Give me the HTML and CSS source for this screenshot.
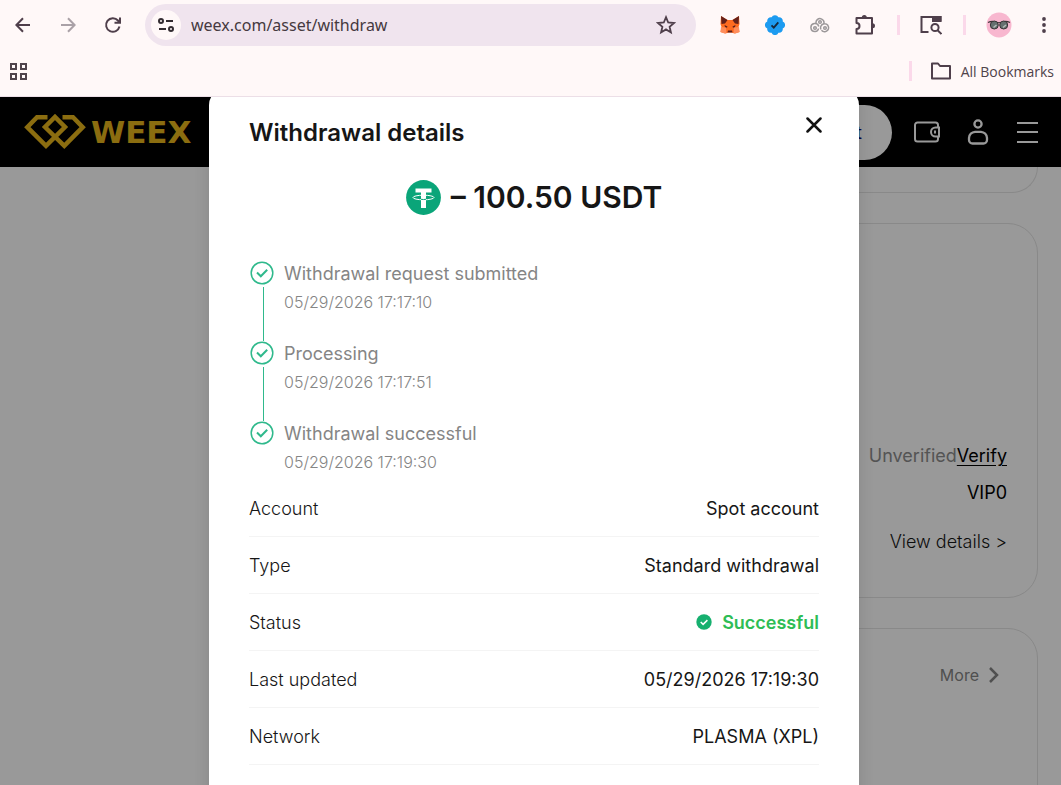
FILE: index.html
```html
<!DOCTYPE html>
<html lang="en">
<head>
<meta charset="utf-8">
<title>WEEX</title>
<link rel="stylesheet" href="styles.css">
</head>
<body>
<header class="browser">
  <div class="toolbar">
    <nav class="nav-buttons" aria-label="Navigation">
      <button class="icon-button" aria-label="Back"><svg width="16" height="16" viewBox="0 0 16 16" fill="none" stroke="#4f3f4b" stroke-width="2"><path d="M15 8H2M8 1.2 1.4 8 8 14.8"/></svg></button>
      <button class="icon-button" aria-label="Forward"><svg width="16" height="16" viewBox="0 0 16 16" fill="none" stroke="#aaa1a7" stroke-width="2"><path d="M1 8h13M8 1.2 14.6 8 8 14.8"/></svg></button>
      <button class="icon-button" aria-label="Reload"><svg width="18" height="18" viewBox="0 0 18 18" fill="none" stroke="#4f3f4b" stroke-width="2"><path d="M15.5 10.6A6.8 6.8 0 1 1 14 4.5L15.6 6.4M16 1.5v5.3h-5.5"/></svg></button>
    </nav>
    <div class="omnibox">
      <button class="site-info" aria-label="Site information"><svg width="16" height="14" viewBox="0 0 16 14" fill="none" stroke="#332c31" stroke-width="2"><circle cx="3" cy="3" r="2"/><path d="M8 3h7M1 11h7"/><circle cx="13" cy="11" r="2"/></svg></button>
      <input class="address" type="text" value="weex.com/asset/withdraw" aria-label="Address">
      <button class="icon-button" aria-label="Bookmark this page"><svg width="20" height="20" viewBox="0 0 20 20" fill="none" stroke="#4f3f4b" stroke-width="1.8"><path d="m10 2.2 2.2 5.3 5.8.5-4.4 3.8 1.3 5.6-4.9-3-4.9 3 1.3-5.6L2 8l5.8-.5z"/></svg></button>
    </div>
    <div class="extensions">
      <button class="icon-button" aria-label="Wallet extension"><svg width="20" height="20" viewBox="0 0 20 20"><path fill="#ff6b20" d="M1 1 7.5 5h5L19 1l.5 8-1 3 1 5-5 1.5-3-1h-3l-3 1L.5 17l1-5-1-3z"/><path fill="#64201a" d="M1 1l6.500 4L5 8.500 1.500 9zM19 1l-6.500 4L15 8.500l3.500.500z"/><path fill="#ff8d5c" d="M1 12l5 .5.5 5.500-2 .5L.5 17zM19 12l-5 .5-.5 5.500 2 .5 4-1.500z"/><path fill="#5e1f1a" d="m4.500 10 3 1.500-.5 1.200-2-.7zM15.500 10l-3 1.500.5 1.200 2-.7zM8 15.500h4l.5 2h-5z"/></svg></button>
      <button class="icon-button" aria-label="Verified badge extension"><svg width="20" height="20" viewBox="0 0 20 20"><path fill="#1d9bf0" d="M10 .3a3.600 3.600 0 0 1 3.400 2 3.600 3.600 0 0 1 4.300 4.300 3.600 3.600 0 0 1 0 6.800 3.600 3.600 0 0 1-4.300 4.300 3.600 3.600 0 0 1-6.800 0 3.600 3.600 0 0 1-4.300-4.300 3.600 3.600 0 0 1 0-6.800A3.600 3.600 0 0 1 6.600 2.300 3.600 3.600 0 0 1 10 .3z"/><path fill="none" stroke="#17283b" stroke-width="1.800" d="m6.500 10.300 2.300 2.400 4.500-5.400"/></svg></button>
      <button class="icon-button" aria-label="Coin extension"><svg width="20" height="16" viewBox="0 0 20 16" fill="none" stroke="#9b9799" stroke-width="1.500"><path d="M6 6a4 4 0 1 1 7.500 1.500M5 14.500a4 4 0 1 1 3.800-5M8.500 11.500a3.500 3.500 0 0 1-3.500 3M11 12.500a4 4 0 1 1 4 2.200 4 4 0 0 1-3.500-1.500"/><circle cx="10" cy="5" r="1.300"/><circle cx="5" cy="11" r="1.300"/><circle cx="15" cy="11" r="1.300"/></svg></button>
      <button class="icon-button" aria-label="Extensions"><svg width="22" height="22" viewBox="0 0 22 22" fill="none" stroke="#4f3f4b" stroke-width="2" stroke-linejoin="round"><path d="M2.500 4h15.500v15.500h-15.500v-4.500a3 3 0 0 0 0-6z"/><path fill="#4f3f4b" stroke="none" d="M7.800 3.500a2.500 2.500 0 0 1 5 0zM18.500 9.300a2.500 2.500 0 0 1 0 5z"/></svg></button>
      <span class="divider"></span>
      <button class="icon-button" aria-label="Search side panel"><svg width="22" height="20" viewBox="0 0 22 20" fill="none" stroke="#4f3f4b" stroke-width="2"><path d="M8.500 17H1.500V2h19v4.500"/><path fill="#4f3f4b" stroke="none" d="M12 1h9.500v6H12z"/><circle cx="15" cy="12.500" r="3.600"/><path d="m17.600 15.200 3.900 3.900"/></svg></button>
      <span class="divider"></span>
      <button class="icon-button profile" aria-label="Profile"><svg width="26" height="26" viewBox="0 0 26 26"><circle cx="13" cy="13" r="12.500" fill="#f8b7cf"/><path d="M2 10.500c3-1.500 6.500-1.500 9 .5q2-1 4 0c2.500-2 6-2 9-.5" fill="none" stroke="#3c3437" stroke-width="1.200"/><circle cx="8.300" cy="13" r="4" fill="#66706f" stroke="#393536"/><circle cx="17.700" cy="13" r="4" fill="#66706f" stroke="#393536"/><path d="M7.500 15.500l3-2.500M17 15.500l3-2.500" stroke="#b4bcb9" stroke-width="1.500"/></svg></button>
      <button class="icon-button more-menu" aria-label="Menu"><svg width="4" height="16" viewBox="0 0 4 16" fill="#4f3f4b"><circle cx="2" cy="2" r="1.900"/><circle cx="2" cy="8" r="1.900"/><circle cx="2" cy="14" r="1.900"/></svg></button>
    </div>
  </div>
  <div class="bookmarks">
    <button class="apps" aria-label="Apps"><svg width="19" height="19" viewBox="0 0 19 19" fill="none" stroke="#4f444b" stroke-width="2"><path d="M2 2h5v5H2zM12 2h5v5h-5zM2 12h5v5H2zM12 12h5v5h-5z"/></svg></button>
    <span class="divider"></span>
    <button class="all-bookmarks"><svg width="22" height="18" viewBox="0 0 22 18" fill="none" stroke="#4f3f4b" stroke-width="2" stroke-linejoin="round"><path d="M2 1.500h6l2 2.500h10v12.500H2z"/></svg>All Bookmarks</button>
  </div>
</header>

<div class="viewport">
  <div class="site">
    <header class="site-header">
      <a class="brand" href="#"><svg width="62" height="38" viewBox="24 114 62 38" fill="none" stroke="#e8b61b" stroke-width="4.500"><path d="M47.500 118.200H37L27.300 128.200 46 146.800 65 128 55 118 45 128 64.300 146.800 82.700 128.200 73 118.200H62.500"/></svg>WEEX</a>
      <div class="site-actions">
        <button class="deposit">Deposit</button>
        <div class="site-icons">
          <button aria-label="Assets"><svg width="26" height="22" viewBox="0 0 26 22" fill="none" stroke="#fff" stroke-width="2"><path d="M24 6V4a2.500 2.500 0 0 0-2.500-2.500h-18A2.500 2.500 0 0 0 1 4v14a2.500 2.500 0 0 0 2.500 2.500h18A2.500 2.500 0 0 0 24 18v-2"/><path d="M25 6.500h-3.500a4.500 4.500 0 0 0 0 9H25zM21 9.500v3"/></svg></button>
          <button aria-label="Account"><svg width="22" height="26" viewBox="0 0 22 26" fill="none" stroke="#fff" stroke-width="2.300"><circle cx="11" cy="5" r="3.600"/><path d="M8 12.800h6a6.500 6.500 0 0 1 6 6v2.200a3.500 3.500 0 0 1-3.500 3.500h-11A3.500 3.500 0 0 1 2 21v-2.200a6.500 6.500 0 0 1 6-6z"/></svg></button>
          <button aria-label="Site menu"><svg width="22" height="24" viewBox="0 0 22 24" stroke="#fff" stroke-width="2"><path d="M1 3h21M1 12h21M1 22h21"/></svg></button>
        </div>
      </div>
    </header>
    <main class="cards">
      <section class="card card-scrolled"></section>
      <section class="card card-account">
        <p class="verification">Unverified<a href="#">Verify</a></p>
        <p class="level">VIP0</p>
        <a class="view-details" href="#">View details &gt;</a>
      </section>
      <section class="card card-more">
        <a class="more" href="#">More<svg width="10" height="16" viewBox="0 0 10 16" fill="none" stroke="currentColor" stroke-width="2.500"><path d="m1 1 7 7-7 7"/></svg></a>
      </section>
    </main>
  </div>

  <div class="overlay">
    <section class="dialog" role="dialog" aria-labelledby="dialog-title">
      <header class="dialog-header">
        <h1 id="dialog-title">Withdrawal details</h1>
        <button class="close" aria-label="Close"><svg width="16" height="16" viewBox="0 0 16 16" stroke="#121212" stroke-width="2.500" stroke-linecap="round"><path d="m1.500 1.500 13 13m0-13-13 13"/></svg></button>
      </header>
      <p class="amount"><svg width="35" height="35" viewBox="0 0 35 35"><circle cx="17.500" cy="17.500" r="17.400" fill="#0aa579"/><path fill="#fff" d="M9.500 8.500h16v4H20V28h-5V12.500H9.500z"/><ellipse cx="17.500" cy="17.500" rx="10.500" ry="2.300" fill="none" stroke="#fff" stroke-width="1"/><path d="M15 19.300q2.500.5 5 0" fill="none" stroke="#0aa579"/></svg>– 100.50 USDT</p>
      <ol class="timeline">
        <li>
          <svg class="step" width="24" height="24" viewBox="0 0 24 24" fill="none" stroke="#2fb98c"><circle cx="12" cy="12" r="10.800" stroke-width="1.500"/><path stroke-width="2" d="m7 11.500 3.800 3.800 6.400-6.500"/></svg>
          <div><h2>Withdrawal request submitted</h2><time>05/29/2026 17:17:10</time></div>
        </li>
        <li>
          <svg class="step" width="24" height="24" viewBox="0 0 24 24" fill="none" stroke="#2fb98c"><circle cx="12" cy="12" r="10.800" stroke-width="1.500"/><path stroke-width="2" d="m7 11.500 3.800 3.800 6.400-6.500"/></svg>
          <div><h2>Processing</h2><time>05/29/2026 17:17:51</time></div>
        </li>
        <li>
          <svg class="step" width="24" height="24" viewBox="0 0 24 24" fill="none" stroke="#2fb98c"><circle cx="12" cy="12" r="10.800" stroke-width="1.500"/><path stroke-width="2" d="m7 11.500 3.800 3.800 6.400-6.500"/></svg>
          <div><h2>Withdrawal successful</h2><time>05/29/2026 17:19:30</time></div>
        </li>
      </ol>
      <dl class="details">
        <div><dt>Account</dt><dd>Spot account</dd></div>
        <div><dt>Type</dt><dd>Standard withdrawal</dd></div>
        <div><dt>Status</dt><dd class="success"><svg width="16" height="16" viewBox="0 0 16 16"><circle cx="8" cy="8" r="7.700" fill="#16b06f"/><path d="m4.700 8 2.400 2.400 4.300-4.300" fill="none" stroke="#fff" stroke-width="1.500"/></svg>Successful</dd></div>
        <div><dt>Last updated</dt><dd>05/29/2026 17:19:30</dd></div>
        <div><dt>Network</dt><dd>PLASMA (XPL)</dd></div>
      </dl>
    </section>
  </div>
</div>
</body>
</html>
```
FILE: styles.css
```css
* { box-sizing: border-box; }

body {
  margin: 0;
  height: 100vh;
  display: flex;
  flex-direction: column;
  overflow: hidden;
  font-family: Inter, "Liberation Sans", sans-serif;
  font-size: 18px;
  color: #161616;
}

h1, h2, p, ol, dl, dd { margin: 0; padding: 0; }
svg { display: block; flex: none; }

button {
  padding: 0;
  border: 0;
  background: none;
  font: inherit;
  color: inherit;
}

/* Browser chrome */
.browser {
  background: #fff8f8;
  border-bottom: 1px solid #ecdfe7;
  font-family: "Open Sans", "Noto Sans", sans-serif;
}

.toolbar {
  display: flex;
  align-items: center;
  height: 50px;
  padding: 0 3px 0 7px;
}

.nav-buttons, .extensions {
  display: flex;
  align-items: center;
  gap: 13px;
}

.icon-button {
  display: flex;
  align-items: center;
  justify-content: center;
  width: 32px;
  height: 32px;
}

.omnibox {
  flex: 1;
  min-width: 0;
  display: flex;
  align-items: center;
  height: 42px;
  margin: 0 18px 0 16px;
  padding: 0 14px 0 6px;
  border-radius: 21px;
  background: #f0e4ee;
}

.site-info {
  display: flex;
  align-items: center;
  justify-content: center;
  flex: none;
  width: 30px;
  height: 30px;
  border-radius: 50%;
  background: #fff8f8;
}

.address {
  flex: 1;
  min-width: 0;
  margin-left: 10px;
  padding: 0;
  border: 0;
  outline: 0;
  background: none;
  font: 16px/24px "Noto Sans", "Open Sans", sans-serif;
  color: #45393f;
}

.divider {
  width: 3px;
  height: 20px;
  margin: 0 2px 0 3px;
  background: #fbd9ea;
}

.profile { width: 36px; }
.more-menu { width: 28px; }

.bookmarks {
  display: flex;
  align-items: center;
  height: 46px;
  padding: 0 7px 4px 9px;
}

.apps { margin-right: auto; }

.all-bookmarks {
  display: flex;
  align-items: center;
  gap: 9px;
  margin-left: 16px;
  font-size: 14px;
  color: #4f434a;
}

/* Exchange page */
.viewport {
  position: relative;
  flex: 1;
  min-height: 0;
  overflow: hidden;
}

.site { background: #fff; }

.site-header {
  display: flex;
  align-items: center;
  justify-content: space-between;
  height: 70px;
  padding: 0 23px 0 24px;
  background: #000;
}

.brand {
  display: flex;
  align-items: center;
  gap: 5px;
  font: bold 31px/38px "DejaVu Sans", sans-serif;
  color: #e8b61b;
  text-decoration: none;
}

.site-actions {
  display: flex;
  align-items: center;
  gap: 22px;
}

.site-icons {
  display: flex;
  align-items: center;
  gap: 27px;
}

.deposit {
  height: 55px;
  padding: 0 30px;
  border-radius: 28px;
  background: #fff;
  color: #0a0a70;
}

.cards {
  display: flex;
  flex-direction: column;
  gap: 30px;
  padding: 0 23px 0 240px;
}

.card {
  display: flex;
  flex-direction: column;
  align-items: flex-end;
  border: 1px solid #e4e4e4;
  border-radius: 30px;
  padding-right: 30px;
}

.card-scrolled {
  height: 26px;
  border-top: 0;
  border-radius: 0 0 30px 30px;
}

.card-account {
  gap: 13px;
  padding-top: 220px;
  padding-bottom: 43px;
  line-height: 24px;
}

.verification { color: #8c8c8c; }
.verification a { color: #000; text-underline-offset: 3px; }
.level { color: #000; }
.view-details { margin-top: 12px; font-weight: 300; color: #161616; text-decoration: none; }

.card-more {
  height: 300px;
  padding-top: 34px;
  padding-right: 38px;
}

.more {
  display: flex;
  align-items: center;
  gap: 10px;
  font-size: 16px;
  line-height: 24px;
  color: #858585;
  text-decoration: none;
}

/* Withdrawal dialog */
.overlay {
  position: absolute;
  inset: 0;
  display: flex;
  justify-content: center;
  align-items: flex-start;
  padding-left: 7px;
  background: rgba(0, 0, 0, 0.4);
}

.dialog {
  width: 650px;
  max-width: 100%;
  margin-top: -8px;
  padding: 28px 40px 60px;
  border-radius: 16px;
  background: #fff;
  box-shadow: 0 0 16px rgba(0, 0, 0, 0.12);
}

.dialog-header {
  display: flex;
  justify-content: space-between;
  align-items: flex-start;
}

.dialog-header h1 {
  font-size: 24px;
  font-weight: 600;
  line-height: 32px;
}

.close { margin-right: -3px; }

.amount {
  display: flex;
  align-items: center;
  justify-content: center;
  gap: 10px;
  margin-top: 28px;
  font-size: 30px;
  font-weight: 600;
  line-height: 40px;
}

.timeline {
  margin-top: 44px;
  list-style: none;
}

.timeline li {
  display: grid;
  grid-template-columns: 26px 1fr;
  grid-template-rows: 26px 1fr;
  column-gap: 9px;
}

.timeline li > div { grid-column: 2; grid-row: 1 / 3; }
.timeline li:not(:last-child) { min-height: 80px; }
.step { margin-left: 1px; }

.timeline li:not(:last-child)::after {
  content: "";
  grid-column: 1;
  grid-row: 2;
  width: 1px;
  margin-left: 14px;
  background: #2fb98c;
}

.timeline h2 {
  font-size: 18px;
  font-weight: 400;
  line-height: 26px;
  color: #858585;
}

.timeline time {
  display: block;
  margin-top: 4px;
  font-size: 16px;
  font-weight: 300;
  line-height: 22px;
  color: #858585;
}

.details { margin-top: 7px; }

.details div {
  display: flex;
  align-items: center;
  justify-content: space-between;
  height: 57px;
  border-bottom: 1px solid #f4f4f4;
}

.details dt { font-weight: 300; }

.details dd {
  display: flex;
  align-items: center;
  gap: 10px;
}

.details .success {
  font-weight: 600;
  color: #2ebd55;
}
```
